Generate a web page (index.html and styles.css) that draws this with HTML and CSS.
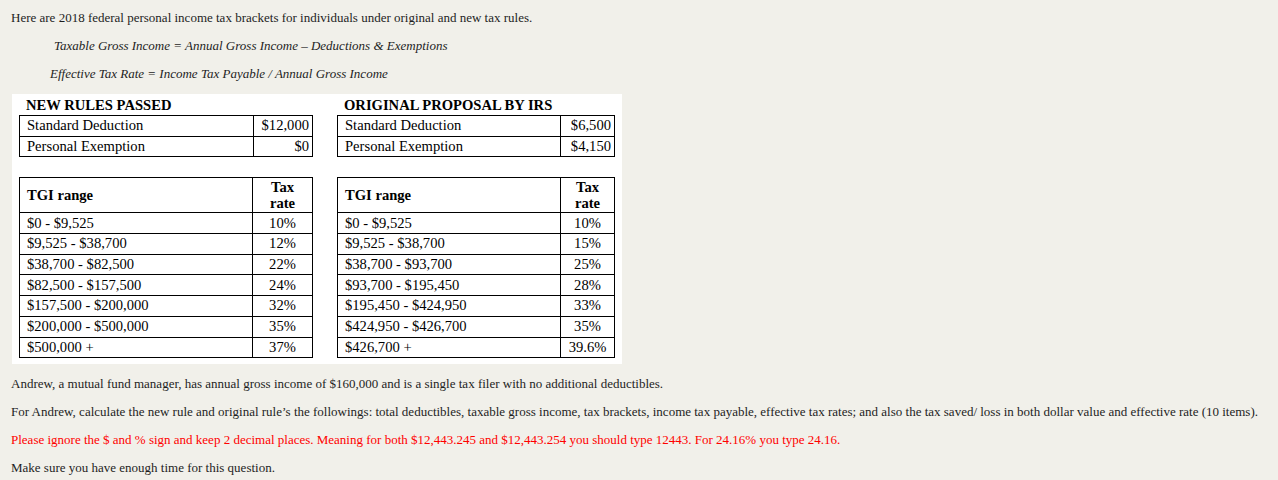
FILE: index.html
```html
<!DOCTYPE html>
<html>
<head>
<meta charset="utf-8">
<link rel="stylesheet" href="styles.css">
</head>
<body>
<div class="page">
  <p class="line">Here are 2018 federal personal income tax brackets for individuals under original and new tax rules.</p>
  <p class="line formula formula-1">Taxable Gross Income = Annual Gross Income – Deductions &amp; Exemptions</p>
  <p class="line formula formula-2">Effective Tax Rate = Income Tax Payable / Annual Gross Income</p>

  <div class="figure">
    <div class="col col-new">
      <div class="col-title">NEW RULES PASSED</div>
      <table class="tbl ded">
        <tr><td>Standard Deduction</td><td class="num">$12,000</td></tr>
        <tr><td>Personal Exemption</td><td class="num">$0</td></tr>
      </table>
      <table class="tbl brk">
        <tr class="head"><th class="rng">TGI range</th><th class="rate">Tax<br>rate</th></tr>
        <tr><td>$0 - $9,525</td><td class="rate">10%</td></tr>
        <tr><td>$9,525 - $38,700</td><td class="rate">12%</td></tr>
        <tr><td>$38,700 - $82,500</td><td class="rate">22%</td></tr>
        <tr><td>$82,500 - $157,500</td><td class="rate">24%</td></tr>
        <tr><td>$157,500 - $200,000</td><td class="rate">32%</td></tr>
        <tr><td>$200,000 - $500,000</td><td class="rate">35%</td></tr>
        <tr><td>$500,000 +</td><td class="rate">37%</td></tr>
      </table>
    </div>
    <div class="col col-orig">
      <div class="col-title">ORIGINAL PROPOSAL BY IRS</div>
      <table class="tbl ded">
        <tr><td>Standard Deduction</td><td class="num">$6,500</td></tr>
        <tr><td>Personal Exemption</td><td class="num">$4,150</td></tr>
      </table>
      <table class="tbl brk">
        <tr class="head"><th class="rng">TGI range</th><th class="rate">Tax<br>rate</th></tr>
        <tr><td>$0 - $9,525</td><td class="rate">10%</td></tr>
        <tr><td>$9,525 - $38,700</td><td class="rate">15%</td></tr>
        <tr><td>$38,700 - $93,700</td><td class="rate">25%</td></tr>
        <tr><td>$93,700 - $195,450</td><td class="rate">28%</td></tr>
        <tr><td>$195,450 - $424,950</td><td class="rate">33%</td></tr>
        <tr><td>$424,950 - $426,700</td><td class="rate">35%</td></tr>
        <tr><td>$426,700 +</td><td class="rate">39.6%</td></tr>
      </table>
    </div>
  </div>

  <p class="line after">Andrew, a mutual fund manager, has annual gross income of $160,000 and is a single tax filer with no additional deductibles.</p>
  <p class="line">For Andrew, calculate the new rule and original rule’s the followings: total deductibles, taxable gross income, tax brackets, income tax payable, effective tax rates; and also the tax saved/ loss in both dollar value and effective rate (10 items).</p>
  <p class="line warn">Please ignore the $ and % sign and keep 2 decimal places. Meaning for both $12,443.245 and $12,443.254 you should type 12443. For 24.16% you type 24.16.</p>
  <p class="line">Make sure you have enough time for this question.</p>
</div>
</body>
</html>
```

FILE: styles.css
```css
html, body {
  margin: 0;
  padding: 0;
  background: #f1f0ea;
}
body {
  font-family: "Liberation Serif", "Times New Roman", serif;
  color: #1e1e1e;
}
.page {
  padding: 10px 0 0 11px;
}
.line {
  margin: 0 0 12px 0;
  font-size: 13px;
  line-height: 16px;
  white-space: nowrap;
}
.formula {
  font-style: italic;
  font-size: 13px;
}
.formula-1 { margin-left: 43px; }
.formula-2 { margin-left: 39px; }
.after { margin-top: 12px; }
.warn { color: #ff0000; }

.figure {
  display: inline-flex;
  gap: 24px;
  background: #ffffff;
  margin-left: 1px;
  padding: 0 7px 6px 7px;
  color: #000;
  font-size: 14.6px;
}
.col {
  display: flex;
  flex-direction: column;
}
.col-new { width: 294px; }
.col-orig { width: 278px; }
.col-title {
  font-weight: bold;
  padding-left: 7px;
  height: 21px;
  line-height: 22px;
}
.tbl {
  border-collapse: collapse;
  table-layout: fixed;
  width: 100%;
}
.tbl td, .tbl th {
  border: 1px solid #000;
  padding: 0 3px 0 7px;
  height: 19.7px;
  line-height: 17px;
  text-align: left;
  font-weight: normal;
  white-space: nowrap;
}
.ded { margin-bottom: 20px; }
.tbl td.num { text-align: right; }
.tbl .rate { text-align: center; padding: 0 1px; }
.col-new .ded td.num { width: 48px; }
.col-orig .ded td.num { width: 43px; }
.col-new .brk td.rate, .col-new .brk th.rate { width: 57px; }
.col-orig .brk td.rate, .col-orig .brk th.rate { width: 51px; }
.head th {
  font-weight: bold;
  height: 34px;
  line-height: 16px;
}
```
